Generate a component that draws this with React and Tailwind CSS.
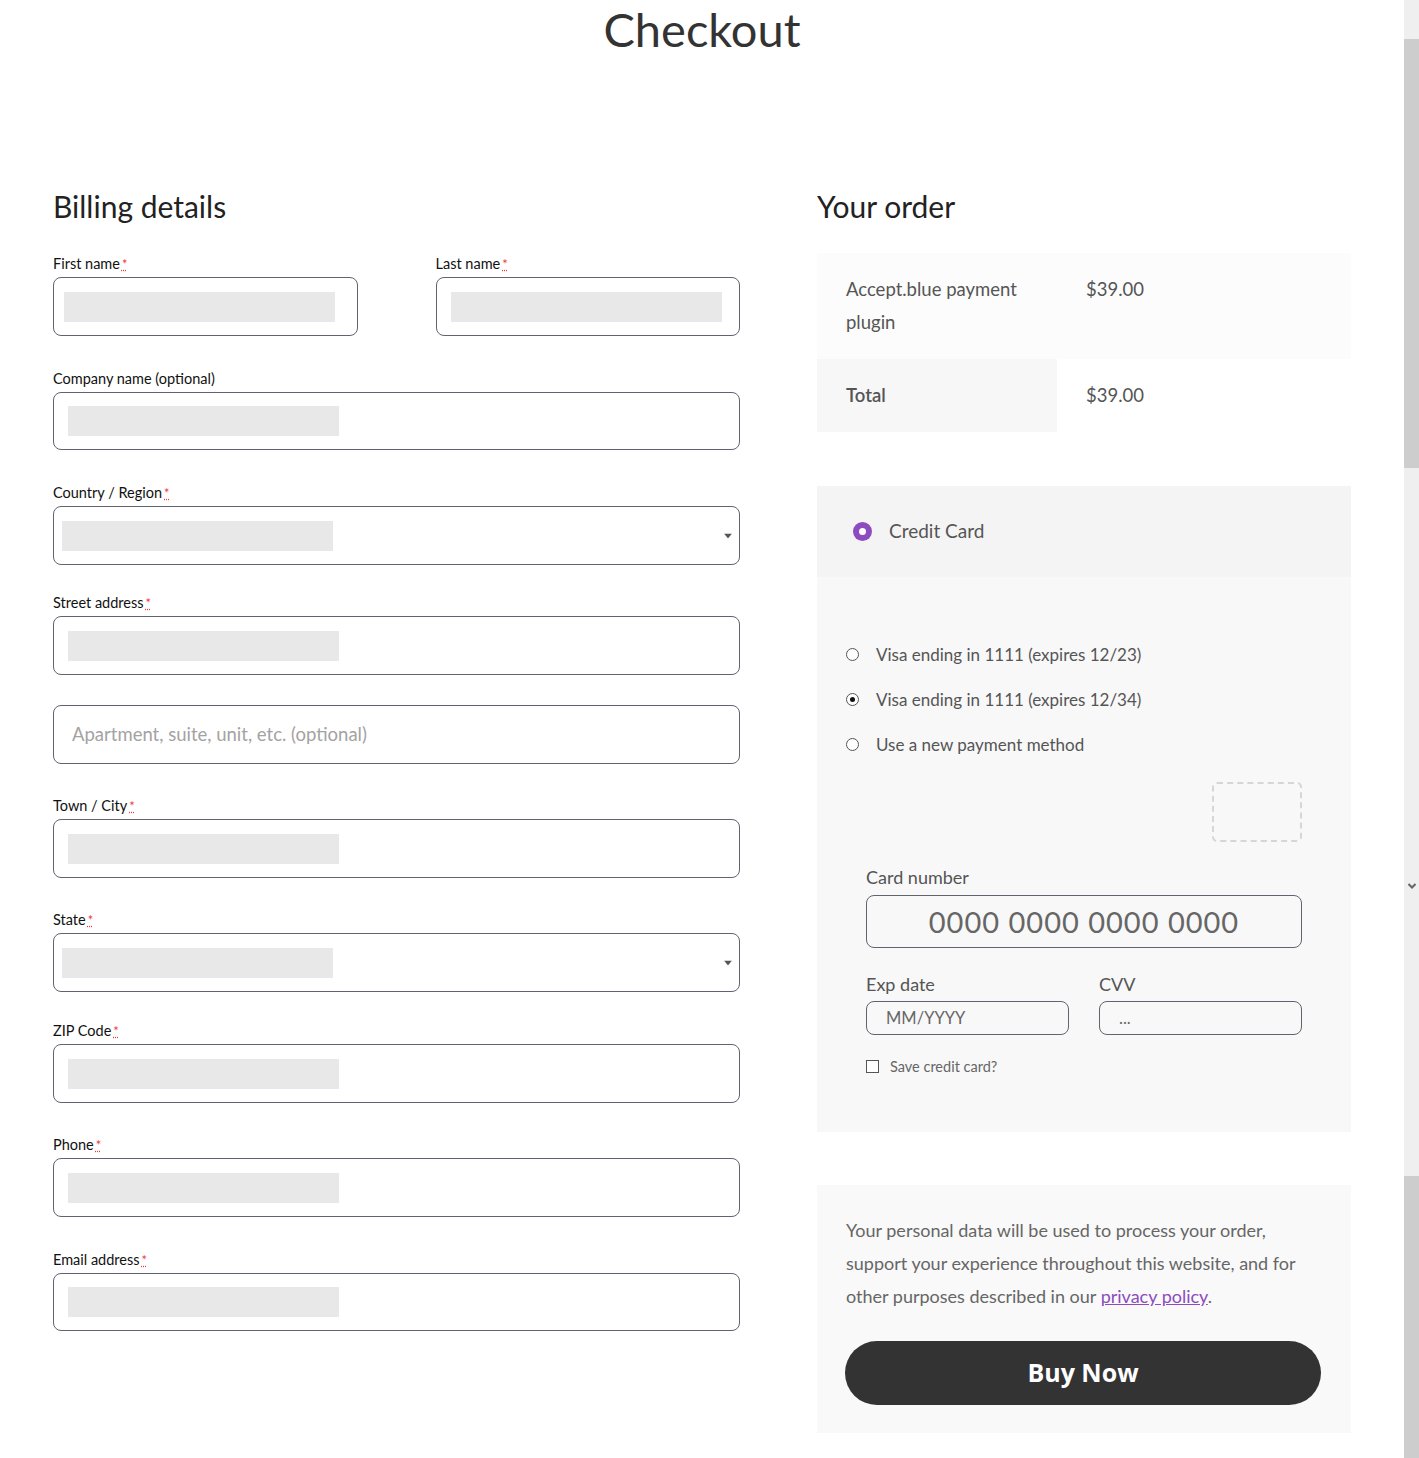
import { useState } from 'react'

const LATO = { fontFamily: 'Lato, "Open Sans", sans-serif' }

// campos da coluna de cobrança: gap = espaço antes do rótulo
const campos = [
  { nome: 'Company name (optional)', gap: 'mt-[33px]', req: false, h: 'h-[58px]' },
  { nome: 'Country / Region', gap: 'mt-[33px]', req: true, select: true },
  { nome: 'Street address', gap: 'mt-[28px]', req: true, extra: true },
  { nome: 'Town / City', gap: 'mt-[32px]', req: true },
  { nome: 'State', gap: 'mt-[32px]', req: true, select: true },
  { nome: 'ZIP Code', gap: 'mt-[29px]', req: true },
  { nome: 'Phone', gap: 'mt-[32px]', req: true },
  { nome: 'Email address', gap: 'mt-[33px]', req: true, h: 'h-[58px]' },
]

function Req() {
  return <span className="ml-[2px] text-[13px] text-[#f0383b] underline decoration-dotted align-top">*</span>
}

function Rotulo({ texto, req }) {
  return (
    <div className="h-[20px] text-[14.5px] leading-[20px] text-[#111]">
      {texto}
      {req && <Req />}
    </div>
  )
}

function Caixa({ select, h = 'h-[59px]', pl = select ? 'pl-[8px]' : 'pl-[14px]' }) {
  return (
    <div className={`relative mt-[3px] flex ${h} items-center rounded-[8px] border border-[#60646f] bg-white ${pl}`}>
      <div className="h-[30px] w-[271px] bg-[#e8e8e8]" />
      {select && (
        <svg className="absolute right-[7px] top-1/2 -translate-y-1/2" width="8" height="5" viewBox="0 0 8 5">
          <path d="M0 0h8L4 5z" fill="#555" />
        </svg>
      )}
    </div>
  )
}

function Radio({ marcado }) {
  return (
    <span className="flex h-[13px] w-[13px] shrink-0 items-center justify-center rounded-full border border-[#555] bg-white">
      {marcado && <span className="h-[5px] w-[5px] rounded-full bg-[#111]" />}
    </span>
  )
}

function Cobranca() {
  return (
    <div className="w-[687px]">
      <h2 className="mt-[188px] text-[30px] leading-[36px] text-[#222]">Billing details</h2>
      <div className="mt-[30px] grid grid-cols-2 gap-[78px]">
        <div>
          <Rotulo texto="First name" req />
          <Caixa pl="pl-[10px]" />
        </div>
        <div>
          <Rotulo texto="Last name" req />
          <Caixa />
        </div>
      </div>
      {campos.map((c) => (
        <div key={c.nome} className={c.gap}>
          <Rotulo texto={c.nome} req={c.req} />
          <Caixa select={c.select} h={c.h} />
          {c.extra && (
            <div className="mt-[30px] flex h-[59px] items-center rounded-[8px] border border-[#60646f] pl-[18px] text-[18.5px] text-[#a3a3a3]">
              Apartment, suite, unit, etc. (optional)
            </div>
          )}
        </div>
      ))}
    </div>
  )
}

function Pedido() {
  const [cartao, setCartao] = useState(1)
  const salvos = ['Visa ending in 1111 (expires 12/23)', 'Visa ending in 1111 (expires 12/34)', 'Use a new payment method']

  return (
    <div className="w-[534px] text-[#555]">
      <h2 className="mt-[188px] text-[30px] leading-[36px] text-[#222]">Your order</h2>

      <div className="mt-[29px] text-[18.5px] leading-[33px]">
        <div className="flex bg-[#fcfcfc]">
          <div className="w-[240px] px-[29px] py-[20px]">Accept.blue payment plugin</div>
          <div className="px-[29px] py-[20px]">$39.00</div>
        </div>
        <div className="flex">
          <div className="w-[240px] bg-[#f7f7f7] px-[29px] py-[20px] font-semibold">Total</div>
          <div className="px-[29px] py-[20px]">$39.00</div>
        </div>
      </div>

      <div className="mt-[54px] bg-[#f8f8f8]">
        <div className="flex h-[91px] items-center gap-[17px] bg-[#f4f4f4] pl-[36px] text-[19px]">
          <span className="flex h-[19px] w-[19px] items-center justify-center rounded-full bg-[#8c4cbf]">
            <span className="h-[7px] w-[7px] rounded-full bg-white" />
          </span>
          Credit Card
        </div>

        <div className="px-[29px] pb-[54px] pt-[66px]">
          <div className="flex flex-col gap-[22px] text-[17px] leading-[23px]">
            {salvos.map((s, i) => (
              <button key={s} type="button" onClick={() => setCartao(i)} className="flex items-center gap-[17px] text-left">
                <Radio marcado={cartao === i} />
                {s}
              </button>
            ))}
          </div>

          <div className="ml-[20px] w-[436px]">
            <div className="mt-[26px] flex justify-end">
              <div className="h-[60px] w-[90px] rounded-[5px] border-2 border-dashed border-[#d6d6d6]" />
            </div>
            <div className="mt-[24px] text-[18px] leading-[22px]">Card number</div>
            <div className="mt-[7px] flex h-[53px] items-center justify-center rounded-[8px] border border-[#60646f] text-[29px] tracking-[1px] text-[#666]">
              0000 0000 0000 0000
            </div>
            <div className="mt-[25px] grid grid-cols-2 gap-[30px] text-[18px]">
              <div>
                <div className="leading-[22px]">Exp date</div>
                <div className="mt-[6px] flex h-[34px] items-center rounded-[8px] border border-[#60646f] pl-[19px] text-[16.5px] text-[#666]">MM/YYYY</div>
              </div>
              <div>
                <div className="leading-[22px]">CVV</div>
                <div className="mt-[6px] flex h-[34px] items-center rounded-[8px] border border-[#60646f] pl-[19px] text-[16.5px] text-[#666]">...</div>
              </div>
            </div>
            <label className="mt-[21px] flex items-center gap-[11px] text-[14.5px] text-[#666]">
              <span className="h-[13px] w-[13px] border border-[#555] bg-white" />
              Save credit card?
            </label>
          </div>
        </div>
      </div>

      <div className="mt-[53px] bg-[#f9f9f9] px-[28px] pb-[28px] pt-[29px]">
        <p className="pl-[1px] text-[18px] leading-[33px] text-[#666]">
          Your personal data will be used to process your order,<br />
          support your experience throughout this website, and for<br />
          other purposes described in our{' '}
          <a href="#" className="text-[#8c4cbf] underline">privacy policy</a>.
        </p>
        <button
          type="button"
          className="mt-[28px] h-[64px] w-[476px] rounded-full bg-[#333] text-[25px] font-bold text-white"
          style={{ fontFamily: '"Open Sans", sans-serif' }}
        >
          Buy Now
        </button>
      </div>
    </div>
  )
}

function Rolagem() {
  return (
    <div className="flex w-[15px] flex-col">
      <div className="h-[39px] bg-[#efefef]" />
      <div className="h-[429px] bg-[#cdcdcd]" />
      <div className="flex h-[708px] justify-center bg-[#efefef] pt-[415px]">
        <svg width="8" height="6" viewBox="0 0 8 6">
          <path d="M0.5 1L4 4.5L7.5 1" stroke="#666" strokeWidth="2" fill="none" />
        </svg>
      </div>
      <div className="flex-1 bg-[#cdcdcd]" />
    </div>
  )
}

export default function App() {
  return (
    <div className="flex h-[1458px] overflow-hidden bg-white" style={LATO}>
      <div className="w-[1404px]">
        <h1 className="text-center text-[47px] leading-[58px] text-[#333]">Checkout</h1>
        <div className="-mt-[58px] flex justify-between px-[53px]">
          <Cobranca />
          <Pedido />
        </div>
      </div>
      <Rolagem />
    </div>
  )
}
